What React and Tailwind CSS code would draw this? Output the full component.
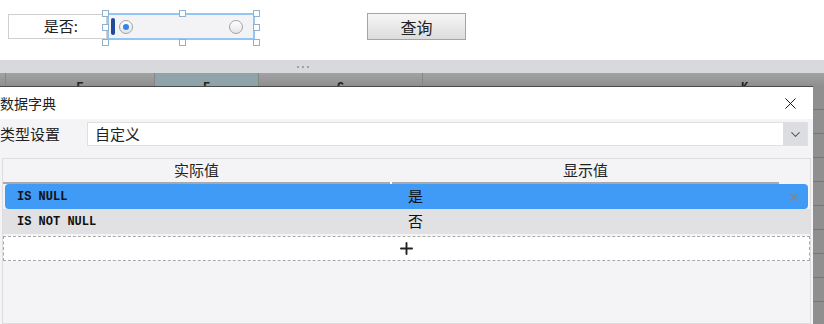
import { X, ChevronDown, Plus } from "lucide-react";

const cjk = { fontFamily: '"Noto Sans CJK SC", "Noto Sans", sans-serif' };
const mono = { fontFamily: '"Liberation Mono", "DejaVu Sans Mono", monospace' };

function Handle({ className }) {
  return (
    <span
      className={`absolute size-[7px] border border-[#8fb0cf] bg-white ${className}`}
    />
  );
}

function Radio({ checked }) {
  return (
    <span className="grid size-[14px] place-items-center rounded-full border border-[#a3a3a3] bg-gradient-to-b from-white to-[#e4e4e4]">
      {checked && <span className="size-[6px] rounded-full bg-[#2f86e8]" />}
    </span>
  );
}

const gridCols = [
  { w: "w-[6px]", label: "" },
  { w: "w-[149px]", label: "E" },
  { w: "w-[104px]", label: "F", active: true },
  { w: "w-[164px]", label: "G" },
  { w: "w-[644px]", label: "K" },
];

export default function App() {
  return (
    <div className="relative h-[324px] w-[824px] overflow-hidden bg-white text-[#222]" style={cjk}>
      {/* toolbar */}
      <div className="flex h-[60px] items-start pl-2 pt-[13px]">
        <div className="mt-px flex h-[25px] w-[99px] items-center justify-end border border-[#cfcfcf] pr-[28px] text-[15px]">
          是否:
        </div>
        <div className="relative h-[27px] w-[148px] border-2 border-[#93c5f5] bg-[#f3f3f5]">
          <div className="flex h-full items-center pl-[2px] pr-[10px]">
            <span className="h-[17px] w-[4px] rounded-sm bg-[#24489a]" />
            <span className="ml-[4px]">
              <Radio checked />
            </span>
            <span className="ml-auto">
              <Radio />
            </span>
          </div>
          <Handle className="-left-[7px] -top-[5px]" />
          <Handle className="left-[70px] -top-[5px]" />
          <Handle className="-right-[7px] -top-[5px]" />
          <Handle className="-left-[7px] top-[9px]" />
          <Handle className="-right-[7px] top-[9px]" />
          <Handle className="-left-[7px] -bottom-[8px]" />
          <Handle className="left-[70px] -bottom-[8px]" />
          <Handle className="-right-[7px] -bottom-[8px]" />
        </div>
        <button className="ml-[112px] h-[27px] w-[99px] border border-[#a4a4a4] bg-gradient-to-b from-[#f6f6f6] to-[#dcdcdc] text-[16px] leading-none">
          查询
        </button>
      </div>

      {/* splitter */}
      <div className="flex h-[13px] items-center bg-[#d8d9dc] pl-[297px]">
        <span className="flex gap-[3px]">
          <span className="size-[2px] rounded-full bg-[#8c8c8c]" />
          <span className="size-[2px] rounded-full bg-[#8c8c8c]" />
          <span className="size-[2px] rounded-full bg-[#8c8c8c]" />
        </span>
      </div>

      {/* background sheet */}
      <div className="flex h-[13px] overflow-hidden bg-gradient-to-b from-[#a3a3a3] to-[#8f8f8f]">
        {gridCols.map((c, i) => (
          <div
            key={i}
            className={`flex shrink-0 justify-center overflow-hidden border-r border-[#868686] pt-[9px] text-[12px] font-bold leading-none text-[#222] ${c.w} ${c.active ? "bg-[#8fa4aa]" : ""}`}
            style={mono}
          >
            {c.label}
          </div>
        ))}
      </div>
      <div className="bg-[#8f8f8f]">
        {Array.from({ length: 10 }).map((_, i) => (
          <div key={i} className="h-[24px] border-b border-[#777]" />
        ))}
      </div>

      {/* dialog */}
      <div className="absolute bottom-0 left-0 top-[86px] flex w-[813px] flex-col border-t border-[#4a4a4a] bg-[#f4f4f6]">
        <div className="flex h-[32px] items-center justify-between bg-white pr-[13px] text-[14px]">
          <span>数据字典</span>
          <X size={19} strokeWidth={1.2} className="text-[#111]" />
        </div>

        <div className="flex items-center pt-[3px] text-[15px]">
          <span className="w-[87px]">类型设置</span>
          <div className="flex h-[24px] w-[721px] items-stretch border border-[#e0e0e2] bg-white">
            <span className="flex flex-1 items-center pl-[7px]">自定义</span>
            <span className="grid w-[24px] place-items-center bg-[#dcdde0]">
              <ChevronDown size={15} strokeWidth={1.8} className="text-[#5f5f5f]" />
            </span>
          </div>
        </div>

        <div className="mx-[2px] mt-[12px] flex flex-1 flex-col border border-[#dddde0] bg-[#f4f4f6]">
          <div className="flex h-[25px] items-stretch text-[15px]">
            <div className="flex w-[387px] items-center justify-center border-b-2 border-[#a9a9ab]">
              实际值
            </div>
            <div className="w-[2px] border-b-2 border-white" />
            <div className="flex w-[387px] items-center justify-center border-b-2 border-[#a9a9ab]">
              显示值
            </div>
          </div>

          <div className="mx-[2px] flex h-[25px] items-center rounded-[4px] bg-[#3f9bf6] text-[#111]">
            <span className="w-[389px] pl-[12px] text-[12px] font-bold" style={mono}>
              IS NULL
            </span>
            <span className="flex-1 pl-[14px] text-[15px]">是</span>
            <X size={14} strokeWidth={3} className="mr-[7px] text-[#7b8796]" />
          </div>

          <div className="flex h-[25px] items-center bg-[#e1e1e3] text-[#111]">
            <span className="w-[391px] pl-[14px] text-[12px] font-bold" style={mono}>
              IS NOT NULL
            </span>
            <span className="flex-1 pl-[14px] text-[15px]">否</span>
          </div>

          <div className="mt-[2px] flex h-[25px] items-center justify-center border border-dashed border-[#a8a8a8] bg-white">
            <Plus size={19} strokeWidth={2.4} className="text-[#222]" />
          </div>
        </div>
      </div>
    </div>
  );
}
